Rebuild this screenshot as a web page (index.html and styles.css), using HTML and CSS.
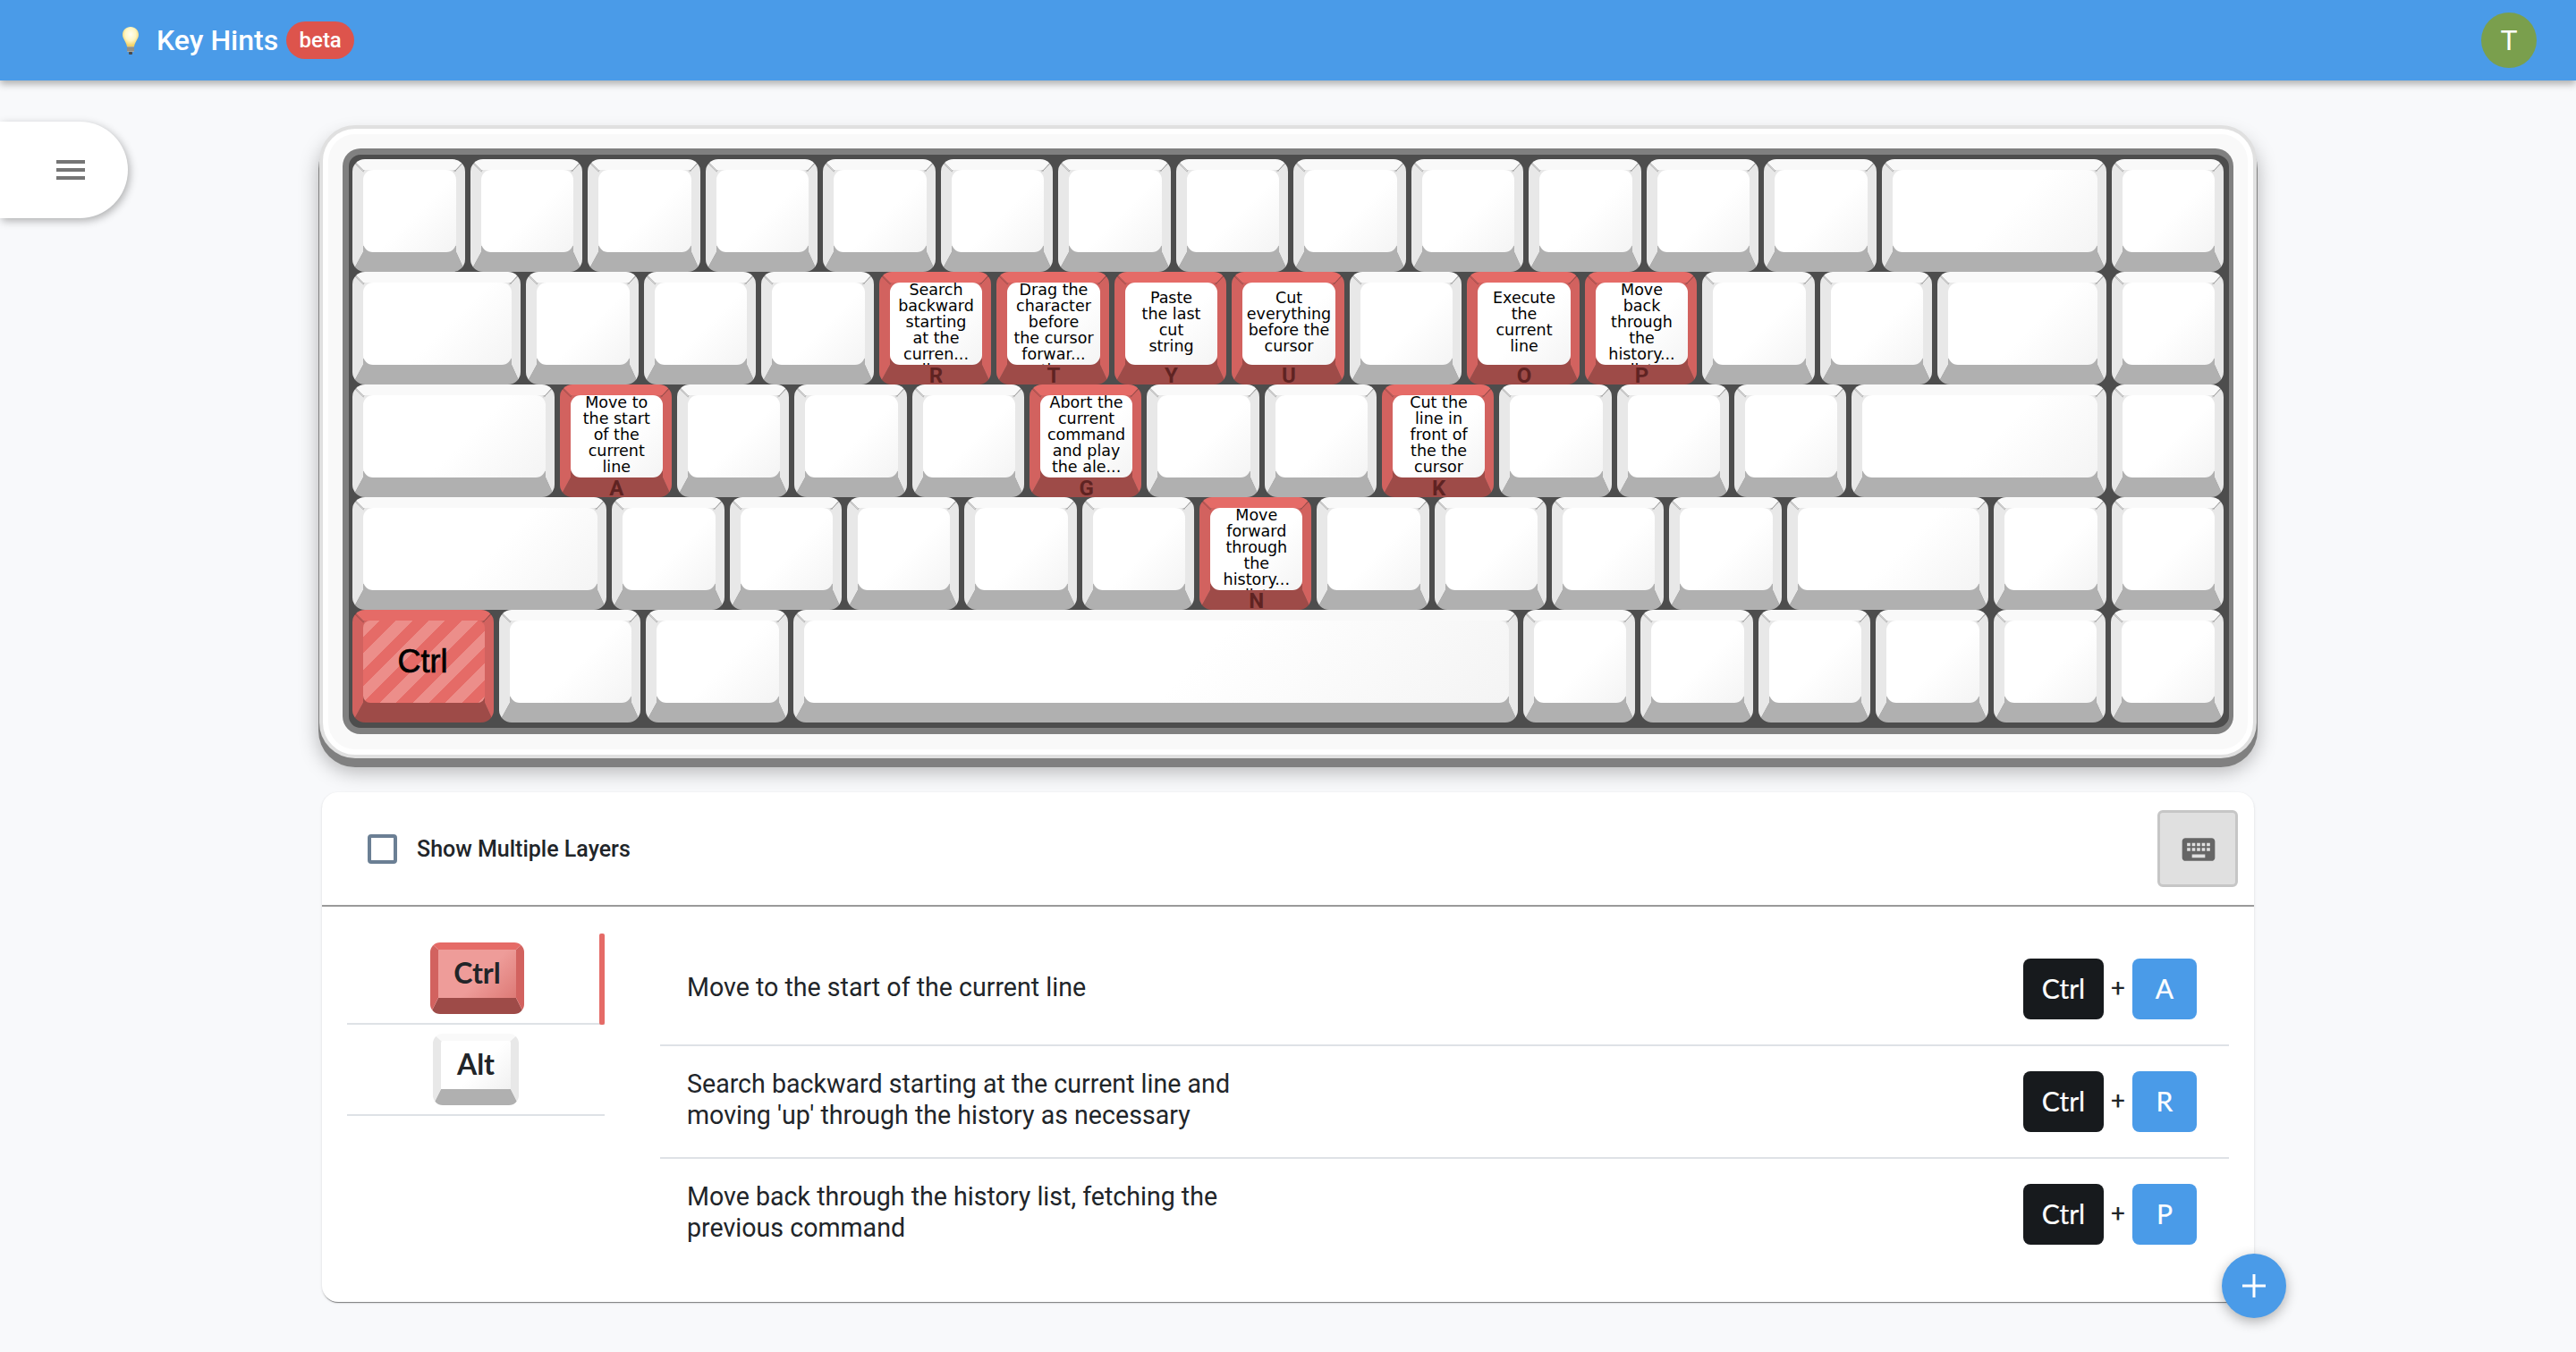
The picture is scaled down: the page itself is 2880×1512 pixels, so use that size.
FILE: index.html
```html
<!DOCTYPE html>
<html lang="en">
<head>
  <meta charset="UTF-8">
  <meta name="viewport" content="width=device-width, initial-scale=1.0">
  <title>Key Hints</title>
  <link rel="stylesheet" href="styles.css">
</head>
<body>
  <header class="topbar">
    <svg class="bulb" viewBox="0 0 18 31" width="18" height="31">
      <defs>
        <radialGradient id="glow" cx="50%" cy="38%" r="60%">
          <stop offset="0" stop-color="#fffef2"/>
          <stop offset="0.55" stop-color="#fff6c4"/>
          <stop offset="1" stop-color="#f3cf5e"/>
        </radialGradient>
      </defs>
      <path d="M9 0C4 0 0 3.800 0 8.800c0 4.600 3.600 7.200 5 13.200h8c1.400-6 5-8.600 5-13.200C18 3.800 14 0 9 0z" fill="url(#glow)"/>
      <rect x="5" y="22" width="8" height="6" rx="1" fill="#a8a8a0"/>
      <path d="M5 24h8M5 26h8" stroke="#77776f" stroke-width="1"/>
      <rect x="7" y="28" width="4" height="3" rx="1" fill="#4a4a4a"/>
    </svg>
    <span class="brand">Key Hints</span>
    <span class="beta">beta</span>
    <div class="avatar">T</div>
  </header>

  <button class="menu-tab" aria-label="Menu">
    <span></span><span></span><span></span>
  </button>

  <main class="page">
    <section class="case">
      <div class="case-inner">
        <div class="plate">
          <div class="row row-1">
            <div class="key"><div class="face"></div></div>
            <div class="key"><div class="face"></div></div>
            <div class="key"><div class="face"></div></div>
            <div class="key"><div class="face"></div></div>
            <div class="key"><div class="face"></div></div>
            <div class="key"><div class="face"></div></div>
            <div class="key"><div class="face"></div></div>
            <div class="key"><div class="face"></div></div>
            <div class="key"><div class="face"></div></div>
            <div class="key"><div class="face"></div></div>
            <div class="key"><div class="face"></div></div>
            <div class="key"><div class="face"></div></div>
            <div class="key"><div class="face"></div></div>
            <div class="key"><div class="face"></div></div>
            <div class="key"><div class="face"></div></div>
          </div>
          <div class="row row-2">
            <div class="key"><div class="face"></div></div>
            <div class="key"><div class="face"></div></div>
            <div class="key"><div class="face"></div></div>
            <div class="key"><div class="face"></div></div>
            <div class="key red"><div class="face top">Search<br>backward<br>starting<br>at the<br>curren...<br>line</div><span class="cap">R</span></div>
            <div class="key red"><div class="face top">Drag the<br>character<br>before<br>the cursor<br>forwar...<br>the</div><span class="cap">T</span></div>
            <div class="key red"><div class="face">Paste<br>the last<br>cut<br>string</div><span class="cap">Y</span></div>
            <div class="key red"><div class="face">Cut<br>everything<br>before the<br>cursor</div><span class="cap">U</span></div>
            <div class="key"><div class="face"></div></div>
            <div class="key red"><div class="face">Execute<br>the<br>current<br>line</div><span class="cap">O</span></div>
            <div class="key red"><div class="face top">Move<br>back<br>through<br>the<br>history...<br>list</div><span class="cap">P</span></div>
            <div class="key"><div class="face"></div></div>
            <div class="key"><div class="face"></div></div>
            <div class="key"><div class="face"></div></div>
            <div class="key"><div class="face"></div></div>
          </div>
          <div class="row row-3">
            <div class="key"><div class="face"></div></div>
            <div class="key red"><div class="face">Move to<br>the start<br>of the<br>current<br>line</div><span class="cap">A</span></div>
            <div class="key"><div class="face"></div></div>
            <div class="key"><div class="face"></div></div>
            <div class="key"><div class="face"></div></div>
            <div class="key red"><div class="face">Abort the<br>current<br>command<br>and play<br>the ale...</div><span class="cap">G</span></div>
            <div class="key"><div class="face"></div></div>
            <div class="key"><div class="face"></div></div>
            <div class="key red"><div class="face">Cut the<br>line in<br>front of<br>the the<br>cursor</div><span class="cap">K</span></div>
            <div class="key"><div class="face"></div></div>
            <div class="key"><div class="face"></div></div>
            <div class="key"><div class="face"></div></div>
            <div class="key"><div class="face"></div></div>
            <div class="key"><div class="face"></div></div>
          </div>
          <div class="row row-4">
            <div class="key"><div class="face"></div></div>
            <div class="key"><div class="face"></div></div>
            <div class="key"><div class="face"></div></div>
            <div class="key"><div class="face"></div></div>
            <div class="key"><div class="face"></div></div>
            <div class="key"><div class="face"></div></div>
            <div class="key red"><div class="face top">Move<br>forward<br>through<br>the<br>history...<br>list</div><span class="cap">N</span></div>
            <div class="key"><div class="face"></div></div>
            <div class="key"><div class="face"></div></div>
            <div class="key"><div class="face"></div></div>
            <div class="key"><div class="face"></div></div>
            <div class="key"><div class="face"></div></div>
            <div class="key"><div class="face"></div></div>
            <div class="key"><div class="face"></div></div>
          </div>
          <div class="row row-5">
            <div class="key red"><div class="face striped">Ctrl</div></div>
            <div class="key"><div class="face"></div></div>
            <div class="key"><div class="face"></div></div>
            <div class="key"><div class="face"></div></div>
            <div class="key"><div class="face"></div></div>
            <div class="key"><div class="face"></div></div>
            <div class="key"><div class="face"></div></div>
            <div class="key"><div class="face"></div></div>
            <div class="key"><div class="face"></div></div>
            <div class="key"><div class="face"></div></div>
          </div>
        </div>
      </div>
    </section>

    <section class="panel">
      <div class="panel-head">
        <label class="layers">
          <input type="checkbox">
          <span>Show Multiple Layers</span>
        </label>
        <button class="kbd-btn" aria-label="Keyboard">
          <svg viewBox="0 0 24 24" width="44" height="44"><path d="M20 5H4c-1.100 0-1.990.9-1.990 2L2 17c0 1.100.9 2 2 2h16c1.100 0 2-.9 2-2V7c0-1.100-.9-2-2-2zm-9 3h2v2h-2V8zm0 3h2v2h-2v-2zM8 8h2v2H8V8zm0 3h2v2H8v-2zm-1 2H5v-2h2v2zm0-3H5V8h2v2zm9 7H8v-2h8v2zm0-4h-2v-2h2v2zm0-3h-2V8h2v2zm3 3h-2v-2h2v2zm0-3h-2V8h2v2z"/></svg>
        </button>
      </div>

      <div class="panel-body">
        <ul class="modifiers">
          <li class="modifier active"><div class="mini-key red-mini">Ctrl</div></li>
          <li class="modifier"><div class="mini-key">Alt</div></li>
        </ul>

        <ul class="hints">
          <li class="hint">
            <p>Move to the start of the current line</p>
            <div class="combo"><span class="badge dark">Ctrl</span><span class="plus">+</span><span class="badge blue">A</span></div>
          </li>
          <li class="hint">
            <p>Search backward starting at the current line and moving 'up' through the history as necessary</p>
            <div class="combo"><span class="badge dark">Ctrl</span><span class="plus">+</span><span class="badge blue">R</span></div>
          </li>
          <li class="hint">
            <p>Move back through the history list, fetching the previous command</p>
            <div class="combo"><span class="badge dark">Ctrl</span><span class="plus">+</span><span class="badge blue">P</span></div>
          </li>
        </ul>
      </div>

      <button class="fab" aria-label="Add">
        <svg viewBox="0 0 28 28" width="28" height="28"><path d="M14 1v26M1 14h26" stroke="#fff" stroke-width="3"/></svg>
      </button>
    </section>
  </main>
</body>
</html>
```

FILE: styles.css
```css
* {
  box-sizing: border-box;
}

body {
  margin: 0;
  min-height: 100vh;
  background-color: #f8f9fb;
  color: #212529;
  font-family: Roboto, sans-serif;
}

button {
  font-family: inherit;
  cursor: pointer;
}

ul {
  margin: 0;
  padding: 0;
  list-style: none;
}

/* top bar */
.topbar {
  height: 90px;
  padding: 0 44px 0 137px;
  display: flex;
  align-items: center;
  background-color: #4a9be8;
  box-shadow: 0 4px 8px rgba(0,0,0,0.3);
  color: white;
}

.bulb {
  margin-right: 20px;
}

.brand {
  font-size: 32px;
  font-weight: 500;
}

.beta {
  width: 76px;
  height: 42px;
  margin-left: 9px;
  display: flex;
  justify-content: center;
  align-items: center;
  background-color: #dd544c;
  border-radius: 21px;
  font-size: 24px;
  font-weight: 500;
}

.avatar {
  width: 62px;
  height: 62px;
  margin-left: auto;
  display: flex;
  justify-content: center;
  align-items: center;
  background-color: #7a9f4d;
  border-radius: 50%;
  font-size: 32px;
}

/* side tab floats over the page */
.menu-tab {
  position: absolute;
  left: 0;
  top: 136px;
  width: 143px;
  height: 108px;
  padding: 0 0 0 63px;
  display: flex;
  flex-direction: column;
  justify-content: center;
  align-items: flex-start;
  gap: 5px;
  background-color: white;
  border: none;
  border-radius: 0 54px 54px 0;
  box-shadow: 2px 3px 10px rgba(0,0,0,0.3);
}

.menu-tab span {
  width: 32px;
  height: 4px;
  background-color: #757575;
}

.page {
  padding-top: 50px;
  display: flex;
  flex-direction: column;
  align-items: center;
}

/* keyboard */
.case {
  width: 2166px;
  height: 708px;
  background-color: white;
  border: 4px solid #e0e0e0;
  border-radius: 40px;
  box-shadow: 0 9px 0 1px #808080, 0 14px 22px 1px rgba(0,0,0,0.28);
}

.case-inner {
  height: calc(100% - 12px);
  margin: 6px;
  padding: 16px 16px 17px 16px;
  background-color: #f9f9f9;
  border-radius: 30px;
}

.plate {
  height: 100%;
  padding: 5px 6px 6px 4px;
  background-color: #4d4d4d;
  border: solid #808080;
  border-width: 7px 5px 7px 7px;
  border-radius: 20px;
}

.row {
  display: grid;
  column-gap: 6px;
}

.row-1 { grid-template-columns: repeat(13, 1fr) 2fr 1fr; }
.row-2 { grid-template-columns: 1.5fr repeat(12, 1fr) 1.5fr 1fr; }
.row-3 { grid-template-columns: 1.8fr repeat(11, 1fr) 2.27fr 1fr; }
.row-4 { grid-template-columns: 2.27fr repeat(10, 1fr) 1.8fr repeat(2, 1fr); }
.row-5 { grid-template-columns: repeat(3, 1.26fr) 6.45fr repeat(6, 1fr); }

.key {
  --top: #f9f9f9;
  --side: #e8e8e8;
  --low: #b0b0b0;
  position: relative;
  min-width: 0;
  height: 126px;
  background: linear-gradient(var(--side) 85px, var(--low) 0) padding-box;
  border: solid;
  border-width: 12px 10px 22px 12px;
  border-color: var(--top) var(--side) var(--low);
  border-radius: 14px;
}

/* thin bevel lines at the top corners */
.key::before,
.key::after {
  content: "";
  position: absolute;
  top: -8px;
  width: 14px;
  height: 1px;
  background-color: rgba(0,0,0,0.22);
}

.key::before {
  left: -9px;
  transform-origin: 0 0;
  transform: rotate(45deg);
}

.key::after {
  right: -7px;
  transform-origin: 100% 0;
  transform: rotate(-45deg);
}

.face {
  height: 100%;
  padding-bottom: 4px;
  display: flex;
  flex-direction: column;
  justify-content: center;
  overflow: hidden;
  background: linear-gradient(135deg, #fff 55%, #f4f4f4);
  border-radius: 11px;
  color: #000;
  font-family: "DejaVu Sans", sans-serif;
  font-size: 17.5px;
  line-height: 18px;
  text-align: center;
  white-space: nowrap;
}

/* text longer than the cap starts at the top and gets clipped */
.face.top {
  display: block;
  padding-bottom: 0;
}

.face.top::before {
  content: "";
  display: block;
  margin-top: -1px;
}

.key.red {
  --top: #e56b67;
  --side: #d2625f;
  --low: #9e4b48;
}

.cap {
  position: absolute;
  left: 0;
  right: 0;
  bottom: -23px;
  color: #5f2322;
  font-size: 24px;
  font-weight: 700;
  line-height: 22px;
  text-align: center;
}

.face.striped {
  padding: 0 3px 0 0;
  background: repeating-linear-gradient(135deg, #ec8e8a 0 13px, #e56b67 13px 26px);
  border-radius: 8px;
  color: black;
  font-family: "Liberation Sans", Arial, sans-serif;
  font-size: 36px;
  line-height: 88px;
  -webkit-text-stroke: 0.7px black;
}

/* panel under the keyboard */
.panel {
  position: relative;
  width: 2160px;
  height: 570px;
  margin-top: 38px;
  background-color: white;
  border-radius: 18px;
  box-shadow: 0 2px 1px -1px rgba(0,0,0,0.45), 0 1px 3px rgba(0,0,0,0.14);
}

.panel-head {
  height: 128px;
  padding: 0 18px 0 51px;
  display: flex;
  justify-content: space-between;
  align-items: center;
  border-bottom: 2px solid #999;
}

.layers {
  display: flex;
  align-items: center;
  gap: 22px;
  font-size: 25px;
  font-weight: 500;
}

.layers input {
  appearance: none;
  width: 33px;
  height: 33px;
  margin: 0;
  border: 4px solid #6b7f94;
  border-radius: 4px;
}

.kbd-btn {
  width: 90px;
  height: 86px;
  padding: 2px 0 0 2px;
  display: flex;
  justify-content: center;
  align-items: center;
  background-color: #e0e0e0;
  border: 3px solid #c6c6c6;
  border-radius: 6px;
}

.kbd-btn svg {
  fill: #666;
}

.panel-body {
  padding: 30px 28px 0;
  display: flex;
  gap: 62px;
}

.modifiers {
  width: 288px;
  flex-shrink: 0;
}

.modifier {
  position: relative;
  height: 102px;
  display: flex;
  justify-content: center;
  align-items: center;
  border-bottom: 2px solid #dee2e6;
}

.modifier.active::after {
  content: "";
  position: absolute;
  top: 0;
  right: 0;
  bottom: -2px;
  width: 6px;
  background-color: #e56b67;
  border-radius: 2px;
}

.mini-key {
  width: 96px;
  height: 80px;
  padding-bottom: 3px;
  display: flex;
  justify-content: center;
  align-items: center;
  background: linear-gradient(135deg, #fff 55%, #f1f1f1) padding-box;
  border: solid;
  border-width: 8px 9px 18px;
  border-color: #f9f9f9 #e8e8e8 #b0b0b0;
  border-radius: 11px;
  font-family: Lato, sans-serif;
  font-size: 32px;
  font-weight: 700;
}

.mini-key.red-mini {
  width: 105px;
  margin-left: 3px;
  background: linear-gradient(135deg, #ee9c99 55%, #dd7a76) padding-box;
  border-color: #e56b67 #d2625f #9e4b48;
}

.hints {
  flex: 1;
}

.hint {
  height: 126px;
  padding: 0 36px 0 30px;
  display: flex;
  justify-content: space-between;
  align-items: center;
  border-bottom: 2px solid #dee2e6;
}

.hint:last-child {
  border-bottom-color: transparent;
}

.hint p {
  width: 650px;
  margin: 0 0 4px;
  font-size: 28.6px;
  line-height: 35px;
}

.combo {
  display: flex;
  align-items: center;
}

.badge {
  height: 68px;
  padding-bottom: 3px;
  display: flex;
  justify-content: center;
  align-items: center;
  border-radius: 8px;
  color: white;
  font-family: Lato, sans-serif;
  font-size: 30px;
  -webkit-text-stroke: 0.2px white;
}

.badge.dark {
  width: 90px;
  background-color: #171a1d;
}

.badge.blue {
  width: 72px;
  background-color: #4a9be8;
}

.plus {
  width: 32px;
  padding-bottom: 3px;
  text-align: center;
  font-size: 28px;
}

.fab {
  position: absolute;
  right: -36px;
  bottom: -18px;
  width: 72px;
  height: 72px;
  padding: 0;
  display: flex;
  justify-content: center;
  align-items: center;
  background-color: #4a9be8;
  border: none;
  border-radius: 50%;
  box-shadow: 0 4px 14px rgba(0,0,0,0.3);
}
```
